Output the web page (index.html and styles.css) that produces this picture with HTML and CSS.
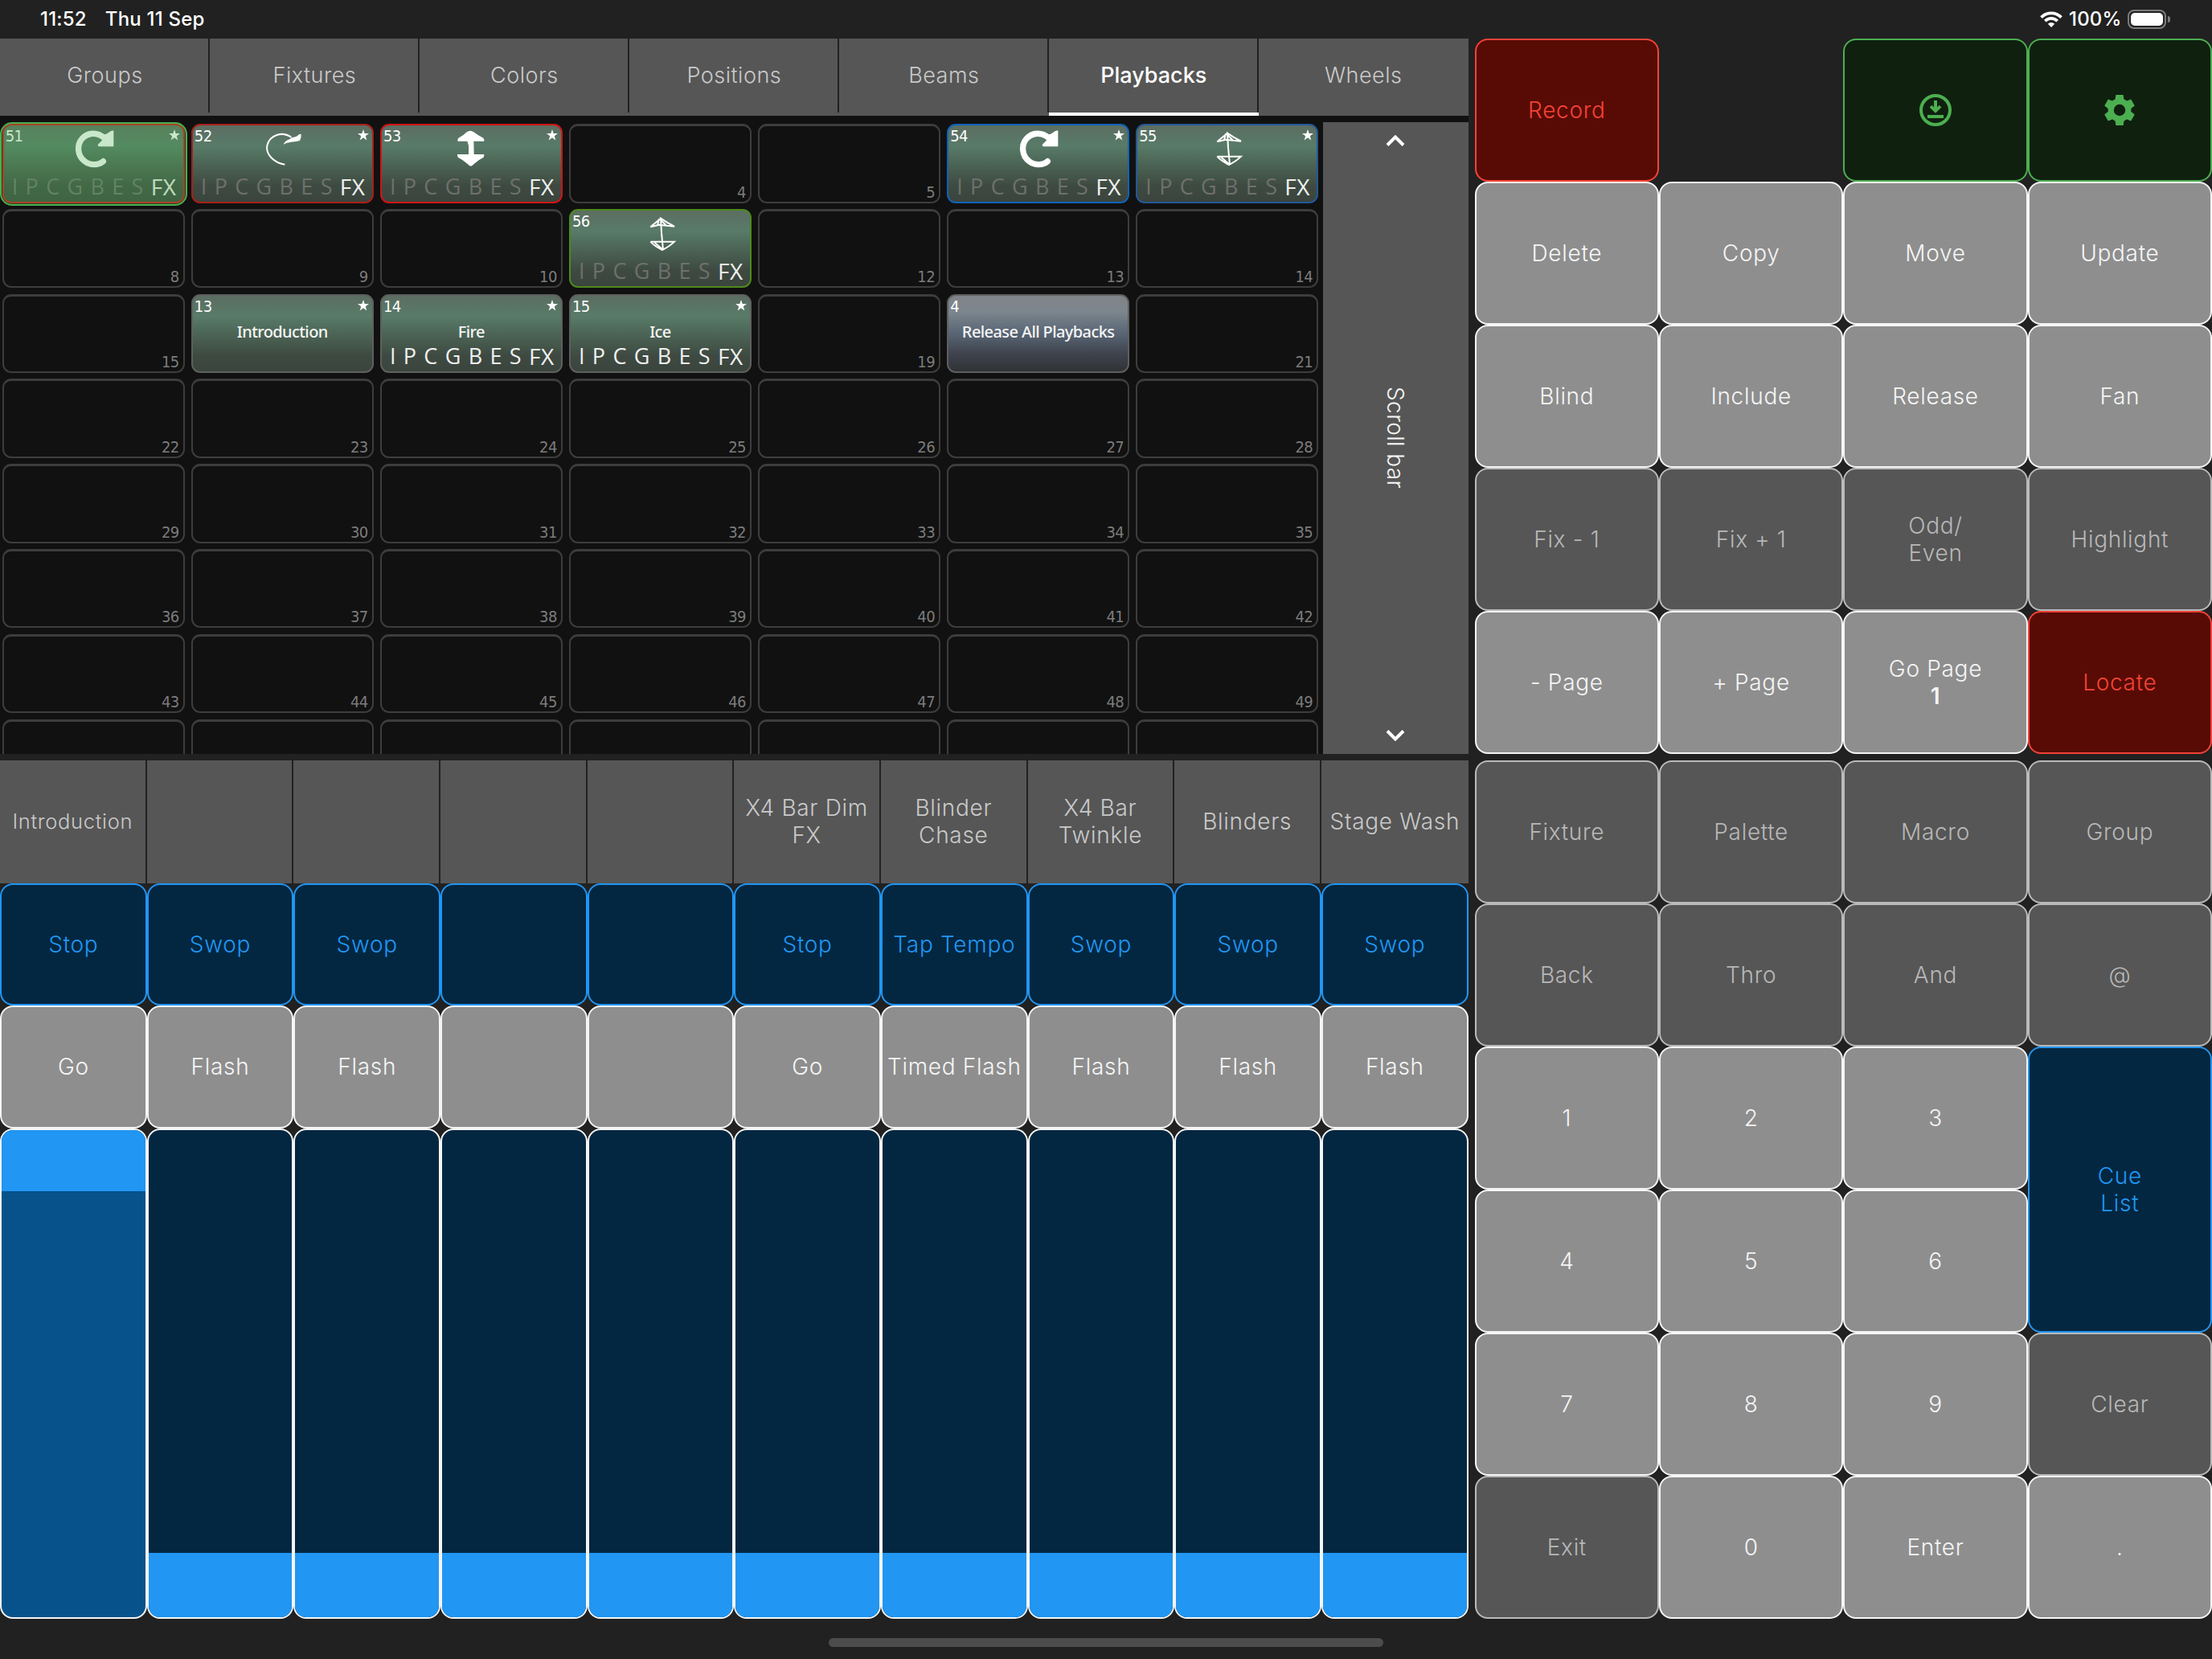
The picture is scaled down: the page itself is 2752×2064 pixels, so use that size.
FILE: index.html
```
<!DOCTYPE html>
<html lang="en">
<head>
    <meta charset="UTF-8">
    <meta name="viewport" content="width=device-width, initial-scale=1.0">
    <title>Playbacks</title>
    <link rel="stylesheet" href="styles.css">
</head>
<body>
    <header class="status-bar">
        <div class="status-left">
            <span>11:52</span>
            <span>Thu 11 Sep</span>
        </div>
        <div class="status-right">
            <svg class="wifi" viewBox="0 0 28 20">
                <path d="M1.500 7.600a17.500 17.500 0 0 1 25 0" />
                <path d="M6.300 12.200a10.800 10.800 0 0 1 15.400 0" />
                <path class="dot" d="M14 20l-4.200-4.300a6 6 0 0 1 8.400 0z" />
            </svg>
            <span class="percent">100%</span>
            <span class="battery"><span class="level"></span></span>
        </div>
    </header>

    <main class="console">
        <section class="left">
            <nav class="tabs">
                <a class="tab">Groups</a>
                <a class="tab">Fixtures</a>
                <a class="tab">Colors</a>
                <a class="tab">Positions</a>
                <a class="tab">Beams</a>
                <a class="tab active">Playbacks</a>
                <a class="tab">Wheels</a>
            </nav>
            <div class="window">
                <div class="cells" id="cells"></div>
                <div class="scroll">
                    <svg class="chevron" viewBox="0 0 24 14"><path d="M2 12.5l10-10 10 10" /></svg>
                    <span>Scroll bar</span>
                    <svg class="chevron" viewBox="0 0 24 14"><path d="M2 1.500l10 10 10-10" /></svg>
                </div>
            </div>
            <div class="faders" id="faders"></div>
        </section>

        <section class="right">
            <div class="keys">
                <button class="key red">Record</button>
                <span></span>
                <button class="key green">
                    <svg class="key-icon" viewBox="0 0 24 24">
                        <circle cx="12" cy="12" r="9" fill="none" stroke="currentColor" stroke-width="2" />
                        <path fill="currentColor" d="M11 6h2v4.200l1.300-1.300 1.400 1.400-3.700 3.600-3.700-3.600 1.400-1.400 1.300 1.300zM7 15h10v2H7z" />
                    </svg>
                </button>
                <button class="key green">
                    <svg class="key-icon" viewBox="0 0 24 24" fill="currentColor">
                        <circle cx="12" cy="12" r="5.4" fill="none" stroke="currentColor" stroke-width="3.6" />
                        <path id="tooth" d="M9.700 2.500h4.600l.5 3.300 1 .8h-7.600l1-.8z" />
                        <use href="#tooth" transform="rotate(60 12 12)" />
                        <use href="#tooth" transform="rotate(120 12 12)" />
                        <use href="#tooth" transform="rotate(180 12 12)" />
                        <use href="#tooth" transform="rotate(240 12 12)" />
                        <use href="#tooth" transform="rotate(300 12 12)" />
                    </svg>
                </button>
                <button class="key">Delete</button>
                <button class="key">Copy</button>
                <button class="key">Move</button>
                <button class="key">Update</button>
                <button class="key">Blind</button>
                <button class="key">Include</button>
                <button class="key">Release</button>
                <button class="key">Fan</button>
                <button class="key dim">Fix - 1</button>
                <button class="key dim">Fix + 1</button>
                <button class="key dim">Odd/<br>Even</button>
                <button class="key dim">Highlight</button>
                <button class="key">- Page</button>
                <button class="key">+ Page</button>
                <button class="key">Go Page<br><b>1</b></button>
                <button class="key red">Locate</button>
            </div>
            <div class="keys">
                <button class="key dim">Fixture</button>
                <button class="key dim">Palette</button>
                <button class="key dim">Macro</button>
                <button class="key dim">Group</button>
                <button class="key dim">Back</button>
                <button class="key dim">Thro</button>
                <button class="key dim">And</button>
                <button class="key dim">@</button>
                <button class="key">1</button>
                <button class="key">2</button>
                <button class="key">3</button>
                <button class="key blue tall">Cue<br>List</button>
                <button class="key">4</button>
                <button class="key">5</button>
                <button class="key">6</button>
                <button class="key">7</button>
                <button class="key">8</button>
                <button class="key">9</button>
                <button class="key dim">Clear</button>
                <button class="key dim">Exit</button>
                <button class="key">0</button>
                <button class="key">Enter</button>
                <button class="key">.</button>
            </div>
        </section>
    </main>

    <div class="home-indicator"></div>

    <script>
        const icons = {
            rotate: '<path d="M109 119C92 134 62 136 40 119C12 98 10 58 30 35C52 10 88 10 112 31" fill="none" stroke="#fff" stroke-width="22" stroke-linecap="round"/><path d="M148 4v60H94q-8-3-3-9l15-15 3-22q12 2 20-6 8-8 19-8z" fill="#fff"/>',
            rotateThin: '<path d="M82 131C40 124 10 92 16 60C26 20 72 6 106 29" fill="none" stroke="#fff" stroke-width="6"/><path d="M143 17q1 14-5 25-12 4-32 5-16 1-30 9 5-11 16-16 10-3 16-10 18-1 24-9 5-4 11-4z" fill="#fff"/>',
            updown: '<path d="M69 5q6 0 13 5 18 14 36 22 4 4 3 12H82l1 49h38q1 8-3 12-18 8-36 25-11 14-22 0-18-17-36-25-4-4-3-12h42V60l-5-16H22q-1-8 3-12 18-8 31-22 7-5 13-5z" fill="#fff"/>',
            updownThin: '<path d="M75 14L37 46l32-8 57 6Q96 29 75 14l3 54 6 64M69 16l-6 24M75 20l22 22M37 101h89q-18 18-45 31Q52 118 37 101M52 104l30 26" fill="none" stroke="#fff" stroke-width="6"/>'
        };

        // slot number -> playback in that slot
        const playbacks = {
            1: { id: 51, icon: "rotate", edge: "edge-red selected", fx: true, star: true },
            2: { id: 52, icon: "rotateThin", edge: "edge-darkred", fx: true, star: true },
            3: { id: 53, icon: "updown", edge: "edge-red", fx: true, star: true },
            6: { id: 54, icon: "rotate", edge: "edge-blue", fx: true, star: true },
            7: { id: 55, icon: "updownThin", edge: "edge-darkblue", fx: true, star: true },
            11: { id: 56, icon: "updownThin", edge: "edge-green", fx: true },
            16: { id: 13, name: "Introduction", star: true },
            17: { id: 14, name: "Fire", attrs: true, star: true },
            18: { id: 15, name: "Ice", attrs: true, star: true },
            20: { id: 4, name: "Release All Playbacks", edge: "macro" }
        };

        const starIcon = '<svg class="star" viewBox="0 0 14 14"><path d="M7 0l1.700 5H14L9.800 8.200l1.500 5.300L7 10.300l-4.300 3.200 1.500-5.300L0 5h5.300z"/></svg>';

        let cells = "";
        for (let slot = 1; slot <= 56; slot++) {
            const p = playbacks[slot];
            if (!p) {
                // the last row only peeks in, its numbers are below the fold
                const number = slot <= 49 ? `<span class="slot-no">${slot}</span>` : "";
                cells += `<div class="slot"><div class="cell">${number}</div></div>`;
                continue;
            }
            let body = `<span class="id">${p.id}</span>`;
            if (p.star) body += starIcon;
            if (p.icon) body += `<svg class="shape" viewBox="0 0 150 150">${icons[p.icon]}</svg>`;
            if (p.name) body += `<span class="name">${p.name}</span>`;
            if (p.fx || p.attrs) {
                const letters = "IPCGBES".split("").map(l => `<i>${l}</i>`).join("");
                body += `<div class="attrs ${p.attrs ? "all" : ""}">${letters}<i class="fx">FX</i></div>`;
            }
            cells += `<div class="slot ${p.edge || ""}"><div class="cell filled">${body}</div></div>`;
        }
        document.getElementById("cells").innerHTML = cells;

        const faders = [
            ["Introduction", "Stop", "Go"],
            ["", "Swop", "Flash"],
            ["", "Swop", "Flash"],
            ["", "", ""],
            ["", "", ""],
            ["X4 Bar Dim FX", "Stop", "Go"],
            ["Blinder Chase", "Tap Tempo", "Timed Flash"],
            ["X4 Bar Twinkle", "Swop", "Flash"],
            ["Blinders", "Swop", "Flash"],
            ["Stage Wash", "Swop", "Flash"]
        ];
        document.getElementById("faders").innerHTML = faders.map(([name, top, bottom], i) => `
            <div class="fader">
                <div class="fader-name ${name === "Introduction" ? "small" : ""}">${name}</div>
                <button class="key blue">${top}</button>
                <button class="key">${bottom}</button>
                <div class="track ${i === 0 ? "full" : ""}"><div class="handle"></div></div>
            </div>`).join("");
    </script>
</body>
</html>
```
FILE: styles.css
```
* {
    box-sizing: border-box;
}

body {
    margin: 0;
    width: 2752px;
    height: 2064px;
    overflow: hidden;
    background: #212121;
    color: #f5f5f5;
    font-family: Inter, Roboto, sans-serif;
    font-size: 28px;
    font-weight: 350;
    letter-spacing: 0.7px;
    line-height: 34px;
}

/* status bar */
.status-bar {
    display: flex;
    justify-content: space-between;
    align-items: center;
    height: 48px;
    padding: 0 52px 0 50px;
    color: white;
    font-size: 24px;
    font-weight: 500;
    letter-spacing: 0.2px;
}

.status-left {
    display: flex;
    gap: 23px;
}

.status-right {
    display: flex;
    align-items: center;
}

.wifi {
    width: 28px;
    height: 20px;
    fill: none;
    stroke: white;
    stroke-width: 3.8;
}

.wifi .dot {
    fill: white;
    stroke: none;
}

.percent {
    width: 64px;
    margin: 0 9px 0 8px;
}

.battery {
    position: relative;
    width: 48px;
    height: 24px;
    margin-right: 5px;
    padding: 2px;
    border: 2px solid #7c7c7c;
    border-radius: 8px;
}

.battery::after {
    content: "";
    position: absolute;
    right: -7px;
    top: 6px;
    width: 3px;
    height: 8px;
    border-radius: 0 4px 4px 0;
    background: #7c7c7c;
}

.level {
    display: block;
    height: 100%;
    border-radius: 5px;
    background: white;
}

/* layout */
.console {
    display: flex;
    gap: 8px;
    height: 1966px;
}

.left {
    display: flex;
    flex-direction: column;
    width: 1826.67px;
}

.right {
    display: flex;
    flex-direction: column;
    gap: 8px;
    flex: 1;
}

/* tabs */
.tabs {
    display: flex;
    height: 96px;
    background: #565656;
    font-size: 27px;
    letter-spacing: 0.5px;
}

.tab {
    flex: 1;
    padding-top: 29px;
    border-bottom: 4px solid #565656;
    background: linear-gradient(#212121, #212121) right / 2px 100% no-repeat;
    background-clip: padding-box;
    color: #c9c9c9;
    text-align: center;
}

.tab:last-child {
    background: none;
}

.tab.active {
    border-bottom-color: white;
    color: white;
    font-weight: 450;
    letter-spacing: 0;
}

/* playback window */
.window {
    display: flex;
    height: 794px;
    padding-top: 8px;
    background: #111;
}

.cells {
    display: grid;
    grid-template-columns: repeat(7, 1fr);
    grid-auto-rows: 105.8px;
    width: 1645.7px;
    overflow: hidden;
    font-family: "DejaVu Sans Condensed", "DejaVu Sans", sans-serif;
    font-size: 20px;
    font-weight: 400;
    letter-spacing: -0.6px;
    line-height: 20px;
}

.slot {
    position: relative;
    padding: 2px 5.5px 5.3px 2.7px;
    --edge: #5d605e;
}

.cell {
    position: relative;
    height: 100%;
    border: 2px solid #3d3d3d;
    border-top-width: 3px;
    border-radius: 11px;
}

.cell.filled {
    border-color: var(--edge);
    border-width: 2px;
    background: linear-gradient(#5c6c61 0%, #587b68 28%, #4b6354 52%, #3e4a41 78%, #3a443d 100%);
    background-origin: border-box;
}

.edge-red { --edge: #d01414; }
.edge-darkred { --edge: #a82018; }
.edge-blue { --edge: #0f63b8; }
.edge-darkblue { --edge: #235899; }
.edge-green { --edge: #4d8a1c; }

.macro .cell {
    background: linear-gradient(#808386 0%, #7d868e 22%, #586574 50%, #40444f 75%, #2e3032 100%);
    background-origin: border-box;
}

.selected::after {
    content: "";
    position: absolute;
    inset: 0 2px 1.5px 0;
    border: 2px solid #4caf50;
    border-radius: 15px;
    background: rgba(76, 175, 80, 0.3);
}

.slot-no {
    position: absolute;
    right: 5px;
    bottom: 2px;
    color: #7c7c7c;
}

.id {
    position: absolute;
    left: 2px;
    top: 3px;
    color: white;
}

.star {
    position: absolute;
    right: 4px;
    top: 5px;
    width: 14px;
    height: 14px;
    fill: white;
}

.shape {
    position: absolute;
    left: 87px;
    top: 5px;
    width: 50px;
    height: 50px;
}

.name {
    display: block;
    padding-top: 35px;
    font-family: "Noto Sans", sans-serif;
    font-size: 20px;
    font-weight: 500;
    letter-spacing: -0.6px;
    text-align: center;
    white-space: nowrap;
}

.attrs {
    position: absolute;
    left: 10px;
    right: 8px;
    bottom: 5px;
    display: flex;
    justify-content: space-between;
    color: #6e706d;
    font-family: "Open Sans", sans-serif;
    font-size: 27px;
    letter-spacing: 0;
    line-height: 28px;
}

.attrs i {
    font-style: normal;
}

.attrs .fx {
    font-size: 28px;
    font-weight: 500;
    letter-spacing: 0.6px;
}

.attrs .fx,
.attrs.all {
    color: #f0f0f0;
}

.scroll {
    display: flex;
    flex-direction: column;
    align-items: center;
    justify-content: space-between;
    flex: 1;
    padding: 16px 0 16px;
    background: #565656;
    letter-spacing: 0.4px;
}

.scroll span {
    writing-mode: vertical-rl;
}

.chevron {
    width: 24px;
    height: 14px;
    fill: none;
    stroke: white;
    stroke-width: 4;
}

/* faders */
.faders {
    display: grid;
    grid-template-columns: repeat(10, 1fr);
    flex: 1;
    margin-top: 8px;
}

.fader {
    display: grid;
    grid-template-rows: 1fr 1fr 1fr 4fr;
    min-width: 0;
}

.fader-name {
    display: flex;
    align-items: center;
    justify-content: center;
    border-right: 2px solid #212121;
    background: #565656;
    color: #c9c9c9;
    text-align: center;
}

.fader-name.small {
    font-size: 25.5px;
}

.fader:last-child .fader-name {
    border-right: 0;
}

.fader .key {
    white-space: nowrap;
}

.track {
    display: flex;
    flex-direction: column;
    justify-content: flex-end;
    overflow: hidden;
    border: 2px solid #f5f5f5;
    border-radius: 16px;
    background: #032741;
}

.track.full {
    justify-content: flex-start;
    background: #07528b;
}

.handle {
    height: 80px;
    background: #2196f3;
}

.full .handle {
    height: 76px;
}

/* keys */
.keys {
    display: grid;
    grid-template-columns: repeat(4, 1fr);
    grid-auto-rows: 178px;
}

.key {
    min-width: 0;
    padding: 0;
    border: 2px solid #f5f5f5;
    border-radius: 16px;
    background: #8e8e8e;
    color: #f5f5f5;
    font: inherit;
    letter-spacing: inherit;
    text-align: center;
}

.key.dim {
    border-color: #bababa;
    background: #565656;
    color: #b8b8b8;
}

.key.red {
    border-color: #f44336;
    background: #580b05;
    color: #f44336;
}

.key.green {
    border-color: #4caf50;
    background: #0f200f;
    color: #4caf50;
}

.key.blue {
    border-color: #2196f3;
    background: #032741;
    color: #2196f3;
}

.key.tall {
    grid-row: span 2;
}

.key b {
    font-weight: 600;
}

.key-icon {
    display: block;
    width: 48px;
    height: 48px;
    margin: 0 auto;
}

.home-indicator {
    width: 690px;
    height: 11px;
    margin: 24px auto 0;
    border-radius: 6px;
    background: #4c4c4c;
}
```
